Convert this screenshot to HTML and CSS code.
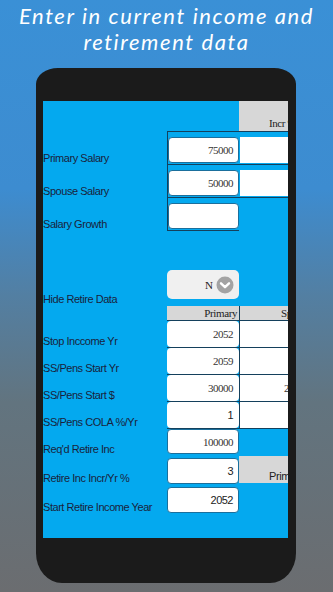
FILE: index.html
```html
<!DOCTYPE html>
<html lang="en">
<head>
    <meta charset="UTF-8">
    <meta name="viewport" content="width=device-width, initial-scale=1.0">
    <title>Retirement Data</title>
    <link rel="stylesheet" href="styles.css">
</head>
<body>
<div class="headline">Enter in current income and<br>retirement data</div>

<div class="phone">
    <div class="screen">
        <!-- current income -->
        <div class="row row-head">
            <div class="label"></div>
            <div class="cell blank"></div>
            <div class="cell gray head-incr">Incr %</div>
        </div>
        <div class="row row-sal">
            <div class="label">Primary Salary</div>
            <div class="cell boxed"><div class="field serif">75000</div></div>
            <div class="cell boxed"><div class="field flat"></div></div>
        </div>
        <div class="row row-sal">
            <div class="label">Spouse Salary</div>
            <div class="cell boxed"><div class="field serif">50000</div></div>
            <div class="cell boxed"><div class="field flat"></div></div>
        </div>
        <div class="row row-sal">
            <div class="label">Salary Growth</div>
            <div class="cell boxed"><div class="field"></div></div>
        </div>

        <!-- hide toggle -->
        <div class="row row-hide">
            <div class="label">Hide Retire Data</div>
            <div class="cell">
                <div class="picker">
                    <span>N</span>
                    <svg class="chev" viewBox="0 0 18 18" width="18" height="18">
                        <circle cx="9" cy="9" r="8.5" fill="#a3a3a3"/>
                        <path d="M5 7.3 L9 11.2 L13 7.3" fill="none" stroke="#fff" stroke-width="2.4" stroke-linecap="round" stroke-linejoin="round"/>
                    </svg>
                </div>
            </div>
        </div>

        <!-- retire table -->
        <div class="row row-th">
            <div class="label"></div>
            <div class="cell gray th">Primary</div>
            <div class="cell gray th th-sp">Spouse</div>
        </div>
        <div class="row row-tb">
            <div class="label">Stop Inccome Yr</div>
            <div class="cell grid"><div class="field serif">2052</div></div>
            <div class="cell grid"><div class="field serif flat">2052</div></div>
        </div>
        <div class="row row-tb">
            <div class="label">SS/Pens Start Yr</div>
            <div class="cell grid"><div class="field serif">2059</div></div>
            <div class="cell grid"><div class="field serif flat">2059</div></div>
        </div>
        <div class="row row-tb">
            <div class="label">SS/Pens Start $</div>
            <div class="cell grid"><div class="field serif">30000</div></div>
            <div class="cell grid"><div class="field serif flat">20000</div></div>
        </div>
        <div class="row row-tb">
            <div class="label">SS/Pens COLA %/Yr</div>
            <div class="cell grid"><div class="field">1</div></div>
            <div class="cell grid"><div class="field flat"></div></div>
        </div>

        <!-- retire income -->
        <div class="row row-req">
            <div class="label">Req'd Retire Inc</div>
            <div class="cell"><div class="field serif">100000</div></div>
        </div>
        <div class="row row-inc">
            <div class="label">Retire Inc Incr/Yr %</div>
            <div class="cell"><div class="field">3</div></div>
            <div class="cell gray side-prim">Primary</div>
        </div>
        <div class="row row-inc">
            <div class="label">Start Retire Income Year</div>
            <div class="cell"><div class="field">2052</div></div>
        </div>
    </div>
</div>
</body>
</html>
```

FILE: styles.css
```css
body {
    margin: 0;
    width: 333px;
    height: 592px;
    overflow: hidden;
    background: linear-gradient(180deg, #3a90d6 0%, #3d8cd0 32%, #537fa2 50%, #62747f 68%, #6b6d70 100%);
    font-family: 'Liberation Sans', Arial, sans-serif;
}
.headline {
    padding-top: 3px;
    text-align: center;
    color: #ffffff;
    font-family: 'Lato', sans-serif;
    font-style: italic;
    font-size: 22px;
    line-height: 26px;
    letter-spacing: 1.6px;
    white-space: nowrap;
}
.phone {
    margin: 13px 0 0 36px;
    width: 260px;
    height: 515px;
    box-sizing: border-box;
    padding: 33px 8px 45px 7px;
    background: #1b1b1b;
    border-radius: 22px 22px 26px 26px / 16px 16px 30px 30px;
}
.screen {
    height: 437px;
    background: #04a9ef;
    overflow: hidden;
}
.row {
    display: flex;
    align-items: flex-end;
}
.label {
    flex: 0 0 124px;
    font-size: 11px;
    line-height: 13px;
    letter-spacing: -0.45px;
    color: #1a1f3c;
    white-space: nowrap;
}
.cell {
    flex: 0 0 72px;
    box-sizing: border-box;
    height: 100%;
    display: flex;
    align-items: flex-end;
}
.gray {
    background: #d7d7d7;
    font-family: 'Liberation Serif', serif;
    font-size: 11px;
    letter-spacing: -0.4px;
    color: #222;
}
.field {
    width: 100%;
    height: 26px;
    box-sizing: border-box;
    background: #ffffff;
    border-radius: 4px;
    border: 1px solid #1b6f9c;
    text-align: right;
    padding-right: 5px;
    font-size: 11px;
    letter-spacing: -0.5px;
    line-height: 25px;
    color: #222;
}
.field.serif {
    font-family: 'Liberation Serif', serif;
    color: #333;
}
.field.flat {
    border-radius: 0;
    border-color: transparent;
}

/* current income rows */
.row-head { height: 31px; }
.head-incr {
    padding: 0 0 2px 30px;
    border-bottom: 1px solid #14405c;
}
.row-head .blank { border-bottom: 1px solid #14405c; }
.row-sal { height: 33px; }
.row-sal .boxed {
    border-left: 1px solid #14405c;
    border-bottom: 1px solid #14405c;
    padding-bottom: 1px;
}
.row-sal .boxed + .boxed { border-left: 0; padding-left: 1px; }

/* toggle */
.row-hide {
    height: 75px;
    align-items: flex-end;
}
.row-hide .cell {
    align-items: flex-start;
    padding-top: 39px;
}
.picker {
    width: 72px;
    height: 29px;
    background: #f0f0f0;
    border-radius: 5px;
    display: flex;
    align-items: center;
    justify-content: flex-end;
    gap: 3px;
    padding-right: 5px;
    box-sizing: border-box;
    font-family: 'Liberation Serif', serif;
    font-size: 11px;
    color: #222;
}

/* retire table */
.row-th { height: 15px; }
.th {
    justify-content: flex-end;
    align-items: center;
    padding-right: 2px;
    border-bottom: 1px solid #14405c;
}
.row-th .th-sp {
    border-left: 1px solid #14405c;
    flex-basis: 76px;
    justify-content: flex-start;
    padding-left: 41px;
}
.row-tb { height: 27px; }
.row-tb .cell {
    border-bottom: 1px solid #14405c;
}
.row-tb .cell + .cell { border-left: 1px solid #14405c; flex-basis: 76px; }
.row-tb .field {
    height: 26px;
    border-color: transparent;
}

/* retire income */
.row-req { height: 27px; }
.row-req .cell { padding-bottom: 2px; }
.row-req .field { height: 25px; }
.row-inc { height: 29px; }
.row-inc .cell { padding-bottom: 1px; }
.side-prim {
    height: 27px;
    align-self: flex-start;
    padding: 0 0 3px 30px;
    font-family: 'Liberation Sans', Arial, sans-serif;
}
```
